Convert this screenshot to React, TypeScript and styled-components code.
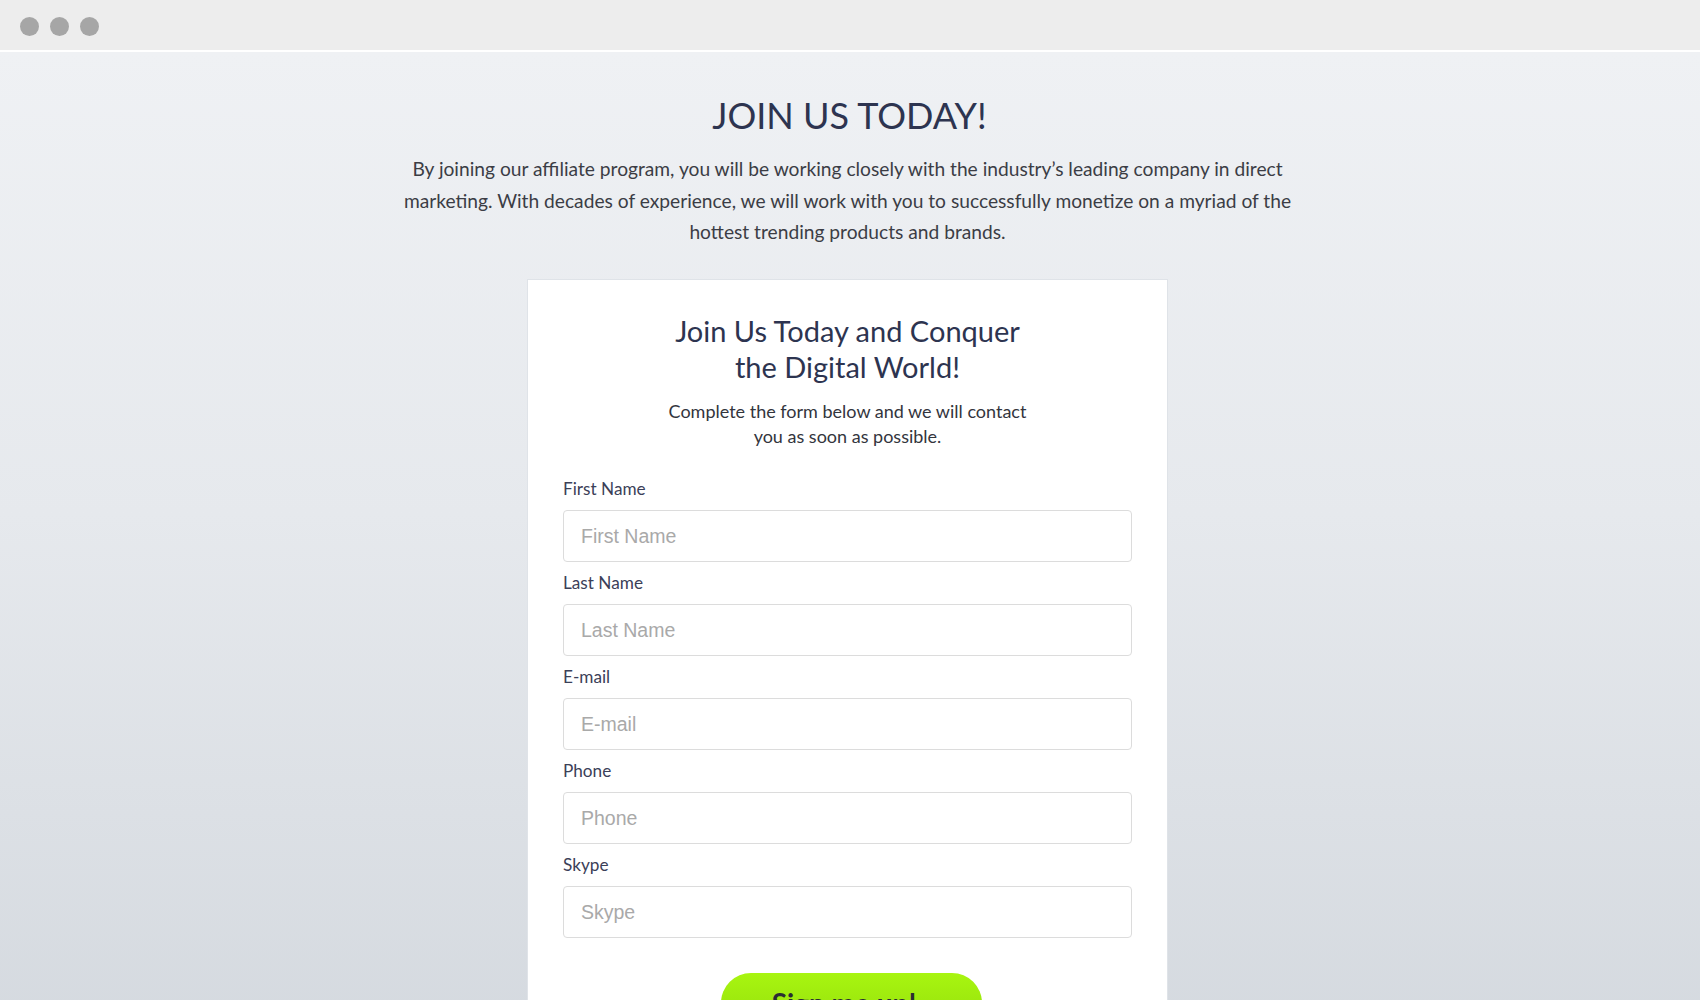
import React from "react";
import styled, { createGlobalStyle } from "styled-components";

const GlobalStyle = createGlobalStyle`
  html, body {
    margin: 0;
    padding: 0;
    background: #eff1f4;
  }
  * { box-sizing: border-box; }
`;

const Window = styled.div`
  width: 1700px;
  height: 1000px;
  overflow: hidden;
  display: flex;
  flex-direction: column;
  font-family: "Lato", "Liberation Sans", sans-serif;
`;

const TitleBar = styled.div`
  height: 52px;
  flex: 0 0 52px;
  background: #ededed;
  border-bottom: 2px solid #ffffff;
  display: flex;
  align-items: center;
  gap: 11px;
  padding: 2px 0 0 20px;
`;

const Dot = styled.span`
  width: 19px;
  height: 19px;
  border-radius: 50%;
  background: #a6a6a6;
`;

const Page = styled.main`
  flex: 1;
  background: linear-gradient(180deg, #eff1f4 0%, #e6e9ed 45%, #d3d8de 100%);
  display: flex;
  flex-direction: column;
  align-items: center;
  padding: 40px 5px 0 0;
`;

const Heading = styled.h1`
  margin: 0;
  padding-left: 4px;
  font-size: 36px;
  line-height: 46px;
  font-weight: 400;
  color: #2d3450;
  text-align: center;
`;

const Intro = styled.p`
  margin: 15px 0 0;
  max-width: 905px;
  font-size: 19.2px;
  line-height: 31.5px;
  color: #3b3d45;
  text-align: center;
`;

const Card = styled.section`
  margin-top: 31px;
  width: 641px;
  flex: 1 0 auto;
  min-height: 800px;
  background: #ffffff;
  border: 1px solid #dfe3e8;
  padding: 33px 35px 40px;
  display: flex;
  flex-direction: column;
`;

const CardTitle = styled.h2`
  margin: 0;
  font-size: 29px;
  line-height: 36px;
  font-weight: 400;
  color: #2d3450;
  text-align: center;
`;

const CardSub = styled.p`
  margin: 14px 0 0;
  font-size: 18px;
  line-height: 25px;
  color: #33353d;
  text-align: center;
`;

const Form = styled.form`
  margin-top: 30px;
  display: flex;
  flex-direction: column;
`;

const Field = styled.div`
  display: flex;
  flex-direction: column;
  margin-bottom: 10.5px;
`;

const Label = styled.label`
  font-size: 17.2px;
  line-height: 20px;
  color: #3b4058;
  margin-bottom: 11.5px;
`;

const Input = styled.input`
  height: 52px;
  width: 100%;
  border: 1px solid #dcdcdc;
  border-radius: 4px;
  padding: 0 17px;
  font-family: "Liberation Sans", Arial, sans-serif;
  font-size: 19.5px;
  color: #333;
  background: #fff;
  outline: none;
  &::placeholder {
    color: #a9a9a9;
  }
`;

const ButtonRow = styled.div`
  display: flex;
  justify-content: center;
  margin-top: 24px;
`;

const Button = styled.button`
  width: 261px;
  height: 60px;
  border: none;
  border-radius: 30px;
  background: linear-gradient(180deg, #a8f510 0%, #93dc0c 100%);
  color: #2a2d33;
  font-family: "Lato", "Liberation Sans", sans-serif;
  font-weight: 700;
  font-size: 28px;
  cursor: pointer;
  margin-left: 8px;
`;

const fields = ["First Name", "Last Name", "E-mail", "Phone", "Skype"];

export default function App() {
  return (
    <>
      <GlobalStyle />
      <Window>
        <TitleBar>
          <Dot />
          <Dot />
          <Dot />
        </TitleBar>
        <Page>
          <Heading>JOIN US TODAY!</Heading>
          <Intro>
            By joining our affiliate program, you will be working closely with the industry’s leading
            company in direct marketing. With decades of experience, we will work with you to
            successfully monetize on a myriad of the hottest trending products and brands.
          </Intro>
          <Card>
            <CardTitle>
              Join Us Today and Conquer
              <br />
              the Digital World!
            </CardTitle>
            <CardSub>
              Complete the form below and we will contact
              <br />
              you as soon as possible.
            </CardSub>
            <Form onSubmit={(e) => e.preventDefault()}>
              {fields.map((f) => (
                <Field key={f}>
                  <Label>{f}</Label>
                  <Input placeholder={f} />
                </Field>
              ))}
              <ButtonRow>
                <Button type="submit">Sign me up! ›</Button>
              </ButtonRow>
            </Form>
          </Card>
        </Page>
      </Window>
    </>
  );
}
